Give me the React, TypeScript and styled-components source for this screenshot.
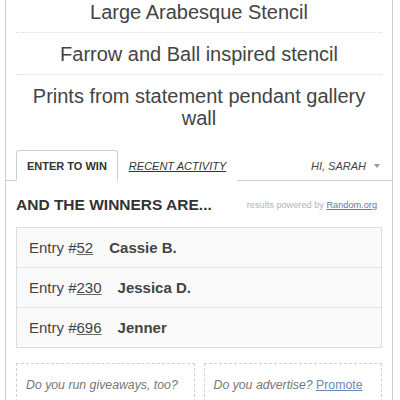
import React from 'react';
import styled, { createGlobalStyle } from 'styled-components';

const GlobalStyle = createGlobalStyle`
  html, body {
    margin: 0;
    padding: 0;
    background: #fff;
    overflow: hidden;
  }
  body {
    font-family: "Liberation Sans", Arial, sans-serif;
    color: #444;
  }
`;

const Widget = styled.div`
  margin: -9px 0 0 5px;
  width: 386px;
  border-left: 1px solid #c8d1de;
  border-right: 1px solid #c8d1de;
  background: #fff;
`;

const Prizes = styled.ul`
  list-style: none;
  margin: 0;
  padding: 0 10px;
`;

const Prize = styled.li`
  text-align: center;
  font-size: 20px;
  line-height: 22px;
  color: #444;
  padding: 10px 16px 9px;
  border-bottom: 1px dotted #dcdcdc;

  &:last-child {
    border-bottom: none;
  }
`;

const Tabs = styled.nav`
  display: flex;
  align-items: flex-end;
  margin-top: 12px;
  padding: 0 10px;
  border-bottom: 1px solid #c8d1de;
`;

const Tab = styled.a<{ $active?: boolean }>`
  display: block;
  font-size: 11px;
  line-height: 14px;
  text-transform: uppercase;
  color: #333;
  padding: 8px 10px 7px;
  margin-bottom: -1px;
  cursor: pointer;
  font-weight: ${p => (p.$active ? 'bold' : 'normal')};
  font-style: ${p => (p.$active ? 'normal' : 'italic')};
  text-decoration: ${p => (p.$active ? 'none' : 'underline')};
  border: 1px solid ${p => (p.$active ? '#c8d1de' : 'transparent')};
  border-bottom-color: ${p => (p.$active ? '#fff' : 'transparent')};
  border-radius: 3px 3px 0 0;
  background: #fff;
`;

const User = styled.div`
  margin-left: auto;
  display: flex;
  align-items: center;
  gap: 8px;
  font-size: 11px;
  font-style: italic;
  color: #444;
  padding: 8px 2px 8px 0;
`;

const Caret = styled.span`
  width: 0;
  height: 0;
  border-left: 3px solid transparent;
  border-right: 3px solid transparent;
  border-top: 4px solid #999;
`;

const Body = styled.div`
  padding: 15px 10px 0;
`;

const Heading = styled.div`
  display: flex;
  align-items: center;
  justify-content: space-between;
  margin-bottom: 13px;
`;

const Title = styled.h2`
  margin: 0;
  font-size: 15.5px;
  font-weight: bold;
  color: #333;
`;

const Powered = styled.span`
  font-size: 9.2px;
  color: #b4b4b4;
  padding-right: 5px;

  a {
    color: #6b7a99;
    text-decoration: underline;
  }
`;

const Winners = styled.div`
  border: 1px solid #dedede;
  background: #fafafa;
`;

const Row = styled.div`
  display: flex;
  align-items: center;
  gap: 16px;
  height: 39px;
  padding: 0 12px;
  font-size: 15px;
  border-top: 1px solid #e2e2e2;

  &:first-child {
    border-top: none;
  }
`;

const Entry = styled.span`
  color: #444;

  u {
    text-decoration-color: #666;
  }
`;

const Name = styled.strong`
  color: #444;
`;

const Promos = styled.div`
  display: grid;
  grid-template-columns: 1fr 1fr;
  gap: 9px;
  margin-top: 15px;
`;

const Promo = styled.div`
  border: 1px dashed #cfcfcf;
  padding: 11px 8px 12px 9px;
  font-size: 12.3px;
  line-height: 20px;
  font-style: italic;
  color: #777;

  a {
    color: #6b8ab8;
    text-decoration: underline;
    font-style: normal;
  }
`;

const prizes = [
  'Large Arabesque Stencil',
  'Farrow and Ball inspired stencil',
  'Prints from statement pendant gallery wall',
];

const winners = [
  { entry: '52', name: 'Cassie B.' },
  { entry: '230', name: 'Jessica D.' },
  { entry: '696', name: 'Jenner' },
];

const App: React.FC = () => {
  return (
    <>
      <GlobalStyle />
      <Widget>
        <Prizes>
          {prizes.map(p => (
            <Prize key={p}>{p}</Prize>
          ))}
        </Prizes>
        <Tabs>
          <Tab $active>Enter to Win</Tab>
          <Tab>Recent Activity</Tab>
          <User>
            HI, SARAH <Caret />
          </User>
        </Tabs>
        <Body>
          <Heading>
            <Title>AND THE WINNERS ARE...</Title>
            <Powered>
              results powered by <a>Random.org</a>
            </Powered>
          </Heading>
          <Winners>
            {winners.map(w => (
              <Row key={w.entry}>
                <Entry>
                  Entry #<u>{w.entry}</u>
                </Entry>
                <Name>{w.name}</Name>
              </Row>
            ))}
          </Winners>
          <Promos>
            <Promo>
              Do you run giveaways, too? Try Rafflecopter! It's free.
            </Promo>
            <Promo>
              Do you advertise? <a>Promote</a> your brand | Rafflecopter
            </Promo>
          </Promos>
        </Body>
      </Widget>
    </>
  );
};

export default App;
